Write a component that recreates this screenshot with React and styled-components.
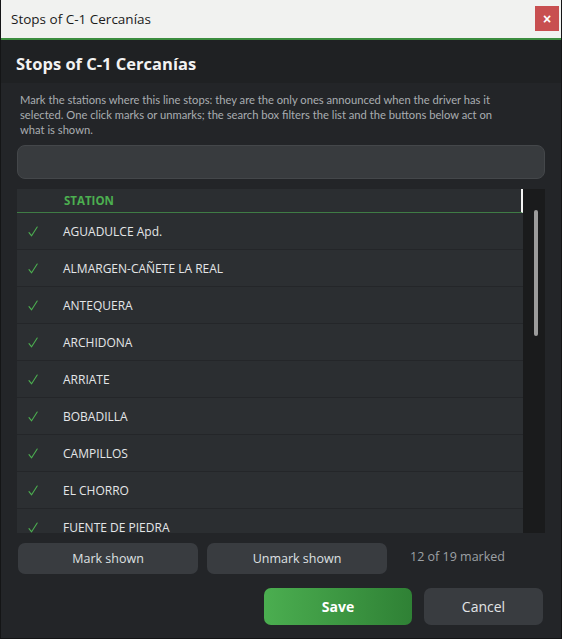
import React, { useState } from 'react';
import styled, { createGlobalStyle } from 'styled-components';

const GlobalStyle = createGlobalStyle`
  html, body {
    margin: 0;
    padding: 0;
    background: #232528;
  }
  * {
    box-sizing: border-box;
  }
`;

const Window = styled.div`
  width: 562px;
  height: 639px;
  display: flex;
  flex-direction: column;
  background: #232528;
  border: 1px solid #141516;
  border-top: none;
  font-family: "Open Sans", "Noto Sans", sans-serif;
  overflow: hidden;
`;

const TitleBar = styled.div`
  height: 40px;
  flex-shrink: 0;
  display: flex;
  align-items: center;
  justify-content: space-between;
  padding: 0 2px 1px 10px;
  background: #f1f2f0;
  border-bottom: 2px solid #3c8d3f;
  color: #1b1b1b;
  font-size: 13.5px;
`;

const CloseButton = styled.button`
  width: 24px;
  height: 25px;
  border: none;
  background: #c84f50;
  color: #fff;
  font-size: 14px;
  font-weight: bold;
  line-height: 1;
  padding: 0;
  cursor: pointer;
`;

const Header = styled.div`
  height: 43px;
  flex-shrink: 0;
  display: flex;
  align-items: center;
  padding: 3px 15px 0 15px;
  background: #1f2123;
  color: #f2f2f2;
  font-size: 16.5px;
  font-weight: 700;
`;

const Body = styled.div`
  flex: 1;
  display: flex;
  flex-direction: column;
  padding: 9px 16px 0 16px;
`;

const Description = styled.p`
  margin: 0 0 0 3px;
  max-width: 478px;
  color: #a9adb1;
  font-family: Lato, "Open Sans", sans-serif;
  font-size: 11.2px;
  line-height: 15px;
`;

const Search = styled.input`
  margin-top: 8px;
  height: 34px;
  width: 100%;
  border: 1px solid #44474a;
  border-radius: 8px;
  background: #383b3e;
  color: #e6e6e6;
  padding: 0 11px;
  font-family: inherit;
  font-size: 13px;
  outline: none;
  caret-color: #e6e6e6;
`;

const Table = styled.div`
  margin-top: 10px;
  height: 344px;
  display: grid;
  grid-template-columns: 1fr 22px;
  background: #2b2e31;
`;

const List = styled.div`
  overflow: hidden;
  display: flex;
  flex-direction: column;
`;

const HeadRow = styled.div`
  height: 24px;
  flex-shrink: 0;
  display: grid;
  grid-template-columns: 47px 1fr;
  align-items: center;
  border-bottom: 1px solid #3f7c45;
  border-right: 2px solid #f4f4f4;
  color: #4caf50;
  font-size: 11.5px;
  font-weight: 700;
`;

const Row = styled.div`
  height: 37px;
  flex-shrink: 0;
  display: grid;
  grid-template-columns: 46px 1fr;
  align-items: center;
  border-bottom: 1px solid #242629;
  background: ${(p) => (p.$odd ? '#2c2f32' : '#2b2e31')};
  color: #e4e6e8;
  font-size: 12px;
  cursor: pointer;
`;

const Check = styled.svg`
  margin-left: 11px;
  visibility: ${(p) => (p.$on ? 'visible' : 'hidden')};
`;

const ScrollTrack = styled.div`
  background: #1a1b1c;
  display: flex;
  justify-content: center;
  padding-top: 21px;
`;

const Thumb = styled.div`
  width: 4px;
  height: 126px;
  margin-left: 3px;
  border-radius: 2px;
  background: #9c9c9c;
`;

const ActionRow = styled.div`
  margin-top: 10px;
  display: flex;
  align-items: center;
  gap: 9px;
  padding-left: 1px;
`;

const ListButton = styled.button`
  width: 180px;
  height: 31px;
  border: none;
  border-radius: 7px;
  background: #393c40;
  color: #dfe1e3;
  font-family: inherit;
  font-size: 12.5px;
  cursor: pointer;
`;

const Count = styled.span`
  margin-left: 14px;
  margin-top: -5px;
  color: #9da1a5;
  font-size: 12.5px;
`;

const Footer = styled.div`
  margin-top: 14px;
  display: flex;
  justify-content: flex-end;
  gap: 12px;
  padding-right: 2px;
`;

const FooterButton = styled.button`
  width: ${(p) => (p.$primary ? '148px' : '119px')};
  height: 37px;
  border: none;
  border-radius: 7px;
  background: ${(p) =>
    p.$primary ? 'linear-gradient(90deg, #4bae50 0%, #2f8135 100%)' : '#393c40'};
  color: ${(p) => (p.$primary ? '#ffffff' : '#e2e4e6')};
  font-family: inherit;
  font-size: 14px;
  font-weight: ${(p) => (p.$primary ? 700 : 400)};
  cursor: pointer;
`;

const stations = [
  'AGUADULCE Apd.',
  'ALMARGEN-CAÑETE LA REAL',
  'ANTEQUERA',
  'ARCHIDONA',
  'ARRIATE',
  'BOBADILLA',
  'CAMPILLOS',
  'EL CHORRO',
  'FUENTE DE PIEDRA',
  'GOBANTES',
  'LAS MELLIZAS',
  'MÁLAGA MARÍA ZAMBRANO',
  'PIZARRA',
  'RONDA',
  'SETENIL',
  'ÁLORA',
  'CARTAMA',
  'VALCHILLÓN',
  'FUENTE PIEDRA Apd.',
];

function CheckMark({ on }) {
  return (
    <Check $on={on} width="10" height="11" viewBox="0 0 10 11" fill="none">
      <path d="M1 6.6 L3.6 9.8 L9.2 1" stroke="#4caf50" strokeWidth="1.1" strokeLinecap="round" strokeLinejoin="round" />
    </Check>
  );
}

export default function App() {
  const [marked, setMarked] = useState(() => new Set(stations.slice(0, 12)));
  const [query, setQuery] = useState('');

  const shown = stations.filter((s) => s.toLowerCase().includes(query.toLowerCase()));

  const toggle = (name) => {
    const next = new Set(marked);
    if (next.has(name)) next.delete(name);
    else next.add(name);
    setMarked(next);
  };

  const markShown = (on) => {
    const next = new Set(marked);
    shown.forEach((s) => (on ? next.add(s) : next.delete(s)));
    setMarked(next);
  };

  return (
    <>
      <GlobalStyle />
      <Window>
        <TitleBar>
          <span>Stops of C-1 Cercanías</span>
          <CloseButton aria-label="Close">×</CloseButton>
        </TitleBar>
        <Header>Stops of C-1 Cercanías</Header>
        <Body>
          <Description>
            Mark the stations where this line stops: they are the only ones announced when the driver has it
            selected. One click marks or unmarks; the search box filters the list and the buttons below act on
            what is shown.
          </Description>
          <Search autoFocus value={query} onChange={(e) => setQuery(e.target.value)} />
          <Table>
            <List>
              <HeadRow>
                <span />
                <span>STATION</span>
              </HeadRow>
              {shown.map((s, i) => (
                <Row key={s} $odd={i % 2 === 1} onClick={() => toggle(s)}>
                  <CheckMark on={marked.has(s)} />
                  <span>{s}</span>
                </Row>
              ))}
            </List>
            <ScrollTrack>
              <Thumb />
            </ScrollTrack>
          </Table>
          <ActionRow>
            <ListButton onClick={() => markShown(true)}>Mark shown</ListButton>
            <ListButton onClick={() => markShown(false)}>Unmark shown</ListButton>
            <Count>
              {marked.size} of {stations.length} marked
            </Count>
          </ActionRow>
          <Footer>
            <FooterButton $primary>Save</FooterButton>
            <FooterButton>Cancel</FooterButton>
          </Footer>
        </Body>
      </Window>
    </>
  );
}
